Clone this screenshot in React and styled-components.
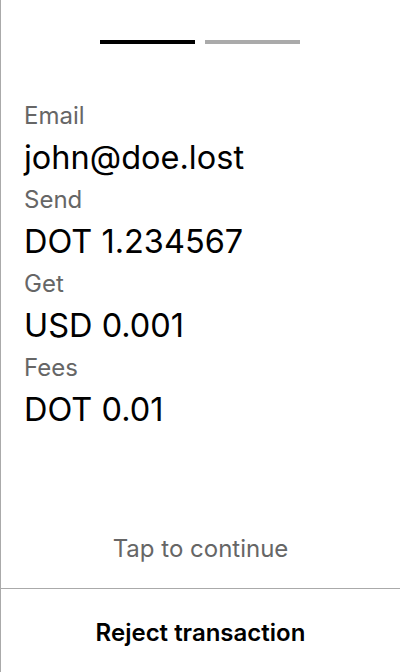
import React from "react";
import styled, { createGlobalStyle } from "styled-components";

const Global = createGlobalStyle`
  html, body { margin: 0; padding: 0; background: #fff; }
  body { font-family: Inter, "Noto Sans", sans-serif; }
  * { box-sizing: border-box; }
`;

const Screen = styled.div`
  width: 400px;
  height: 672px;
  border-left: 1px solid #aaaaaa;
  display: flex;
  flex-direction: column;
  background: #fff;
`;

const Progress = styled.div`
  display: flex;
  justify-content: center;
  gap: 10px;
  padding-top: 40px;
  padding-right: 1px;
`;

const Bar = styled.div`
  width: 95px;
  height: 4px;
  background: ${(p) => (p.$active ? "#000" : "#aaaaaa")};
`;

const Details = styled.dl`
  margin: 58px 0 0;
  padding: 0 0 0 23px;
  flex: 1;
`;

const Label = styled.dt`
  font-size: 24px;
  line-height: 28px;
  color: #666;
`;

const Value = styled.dd`
  margin: 0;
  font-size: 32.5px;
  line-height: 56px;
  color: #000;
`;

const Hint = styled.div`
  text-align: center;
  font-size: 24px;
  line-height: 28px;
  color: #666;
  padding-bottom: 25px;
`;

const Footer = styled.button`
  all: unset;
  box-sizing: border-box;
  display: flex;
  align-items: center;
  justify-content: center;
  height: 84px;
  padding-top: 3px;
  border-top: 1px solid #aaaaaa;
  font-family: Inter, "Noto Sans", sans-serif;
  font-size: 24px;
  font-weight: 600;
  color: #000;
  cursor: pointer;
`;

const rows = [
  ["Email", "john@doe.lost"],
  ["Send", "DOT 1.234567"],
  ["Get", "USD 0.001"],
  ["Fees", "DOT 0.01"],
];

export default function App() {
  return (
    <>
      <Global />
      <Screen>
        <Progress>
          <Bar $active />
          <Bar />
        </Progress>
        <Details>
          {rows.map(([l, v]) => (
            <React.Fragment key={l}>
              <Label>{l}</Label>
              <Value>{v}</Value>
            </React.Fragment>
          ))}
        </Details>
        <Hint>Tap to continue</Hint>
        <Footer>Reject transaction</Footer>
      </Screen>
    </>
  );
}
